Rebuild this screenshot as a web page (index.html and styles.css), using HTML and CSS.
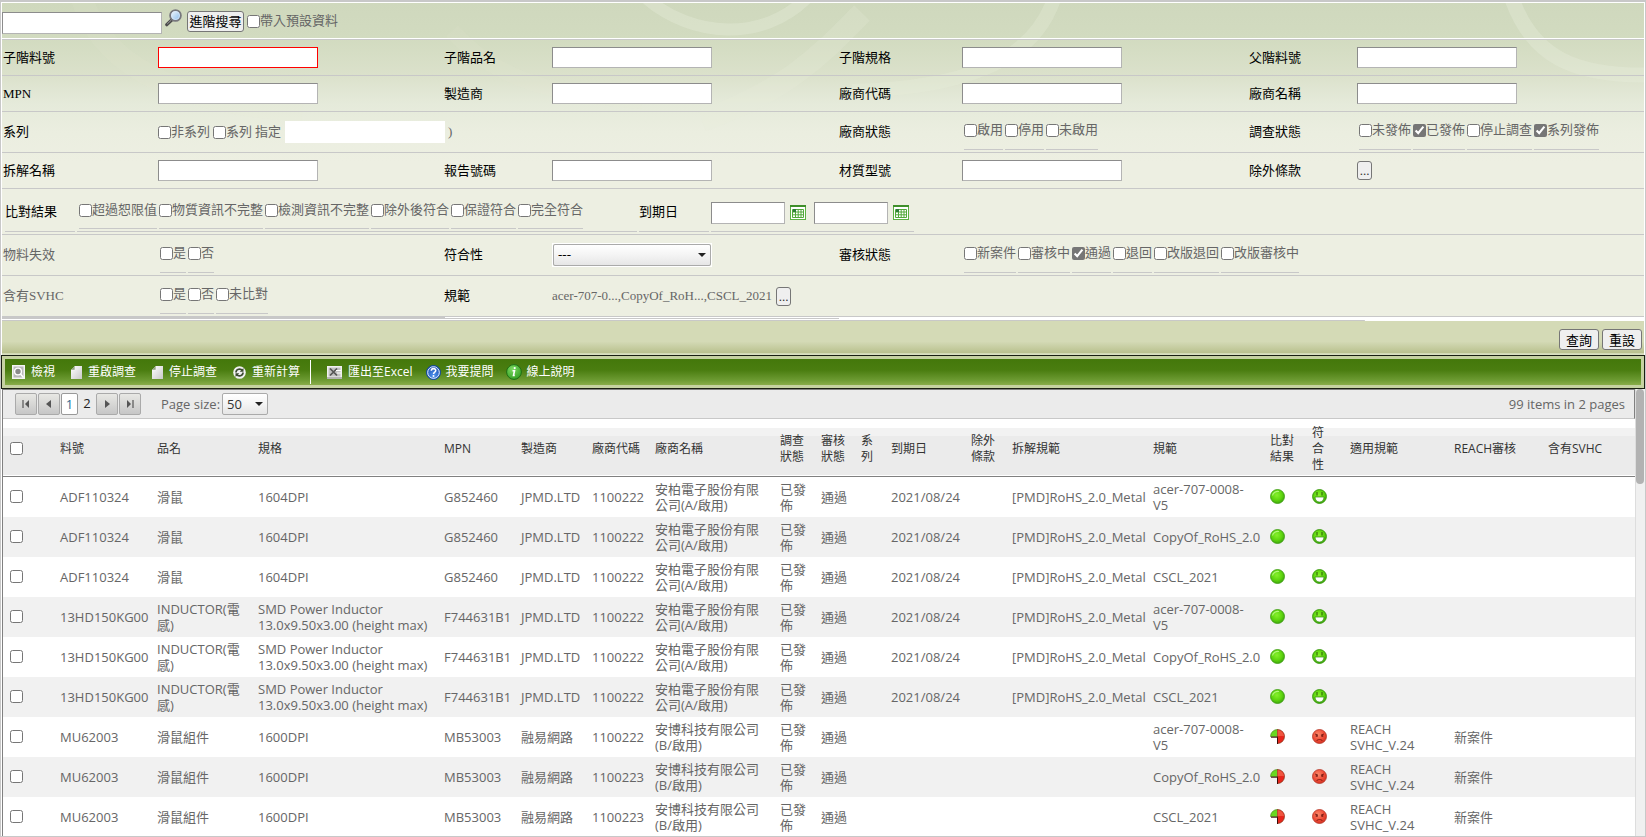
FILE: index.html
```html
<!DOCTYPE html>
<html lang="zh-Hant">
<head>
<meta charset="utf-8">
<title>料號調查</title>
<link rel="stylesheet" href="styles.css">
</head>
<body>
<svg class="defs" aria-hidden="true">
  <defs>
    <radialGradient id="gGreen" cx=".45" cy=".4" r=".6"><stop offset="0" stop-color="#86f02c"/><stop offset=".6" stop-color="#5fd60f"/><stop offset="1" stop-color="#3fa80c"/></radialGradient>
    <radialGradient id="gRed" cx=".4" cy=".35" r=".7"><stop offset="0" stop-color="#f98a6c"/><stop offset=".6" stop-color="#ee4a35"/><stop offset="1" stop-color="#cf2f20"/></radialGradient>
    <radialGradient id="gBlue" cx=".5" cy=".7" r=".7"><stop offset="0" stop-color="#4f93ee"/><stop offset="1" stop-color="#1748a8"/></radialGradient>
    <radialGradient id="gInfo" cx=".4" cy=".3" r=".8"><stop offset="0" stop-color="#7ddb62"/><stop offset="1" stop-color="#2d9a1e"/></radialGradient>
    <linearGradient id="gDoc" x1="0" y1="0" x2="1" y2="1"><stop offset="0" stop-color="#ffffff"/><stop offset="1" stop-color="#c9c9c9"/></linearGradient>
    <linearGradient id="gLens" x1="0" y1="0" x2="1" y2="1"><stop offset="0" stop-color="#ffffff"/><stop offset="1" stop-color="#7db4ea"/></linearGradient>
    <symbol id="ball" viewBox="0 0 15 15"><circle cx="7.500" cy="7.500" r="7" fill="url(#gGreen)" stroke="#3c9a12" stroke-width=".8"/><path d="M2.500 6.500C3 3.500 6 2 9 2.500" stroke="#b4f77c" fill="none" stroke-width="1.200"/></symbol>
    <symbol id="smile" viewBox="0 0 15 15"><circle cx="7.500" cy="7.500" r="6.900" fill="url(#gGreen)" stroke="#3c9a12" stroke-width="1"/><path d="M5 3v3.500M10 3v3.500" stroke="#2b5a08" stroke-width="1"/><path d="M3 8h9c0 3-2 5-4.500 5S3 11 3 8z" fill="#fff" stroke="#2f8a0c" stroke-width=".7"/></symbol>
    <symbol id="pie" viewBox="0 0 15 15"><path d="M7.500 7.500H.5a7 7 0 0 1 7-7z" fill="#6ad820" stroke="#4a8a18" stroke-width=".7"/><path d="M7.500 .5a7 7 0 0 1 0 14z" fill="#e8261c" stroke="#7d3012" stroke-width=".7"/><path d="M7.500 1a6.500 6.500 0 0 1 6.500 6H7.500z" fill="#f0553f"/><path d="M1 8.200h6.500V15" fill="none" stroke="#3a0d05" stroke-width="1"/></symbol>
    <symbol id="angry" viewBox="0 0 15 15"><circle cx="7.500" cy="7.500" r="7" fill="url(#gRed)" stroke="#b5392a" stroke-width=".8"/><path d="M3 5l3 1.200M12 5L9 6.200M3.500 7h2.500M9 7h2.500M4.800 5.500v2.300M10.300 5.500v2.300M4.500 12c1-2 5-2 6 0" stroke="#6b130c" stroke-width=".8" fill="none"/></symbol>
    <symbol id="cal" viewBox="0 0 16 15"><rect x=".5" y=".5" width="15" height="14" fill="#fff" stroke="#5cb043"/><path d="M0 1h16" stroke="#3f8f2a" stroke-width="2"/><path d="M2.500 4.500h11v8h-11zM2.500 7h11M2.500 9.800h11M5.500 4.500v8M8.200 4.500v8M11 4.500v8" fill="none" stroke="#52a83a" stroke-width="1"/><rect x="3" y="4" width="3" height="3" fill="#2f7d3a"/></symbol>
    <symbol id="doc" viewBox="0 0 11 13"><path d="M4 0h7v13H0V4z" fill="url(#gDoc)"/><path d="M4 0v4H0z" fill="#8fa07c"/><path d="M4 .3v3.900H.3" fill="none" stroke="#f4f4f4" stroke-width=".7"/></symbol>
  </defs>
</svg>

<section class="query">
  <svg class="swirl" viewBox="0 0 1642 150" preserveAspectRatio="none" aria-hidden="true">
    <g fill="none" stroke="#e9eedc">
      <path d="M645 -4C690 34 760 40 806 -6" stroke-width="12" opacity=".35"/>
      <path d="M860 10C820 50 790 85 700 118" stroke-width="22" opacity=".22"/>
      <path d="M1052 -4C1030 60 960 85 850 88" stroke-width="14" opacity=".3"/>
      <path d="M1510 -4C1530 52 1570 74 1650 72" stroke-width="15" opacity=".35"/>
      <path d="M80 -4C100 60 170 100 300 108" stroke-width="22" opacity=".1"/>
      <path d="M450 28C490 70 530 90 640 98" stroke-width="16" opacity=".1"/>
    </g>
  </svg>
  <form class="quick">
    <input class="box" type="text" aria-label="搜尋">
    <svg class="lens" viewBox="0 0 17 18" role="img" aria-label="搜尋"><path d="M1.800 15.700l5.400-5.200" stroke="#4a4a4a" stroke-width="3.200" stroke-linecap="round"/><path d="M2.200 15l4-3.800" stroke="#9a9a9a" stroke-width="1"/><circle cx="10.500" cy="6.500" r="5.400" fill="url(#gLens)" stroke="#77777d" stroke-width="1.800"/><circle cx="10.500" cy="6.500" r="4" fill="none" stroke="#d8e6f8" stroke-width=".8"/></svg>
    <button class="btn adv" type="button">進階搜尋</button>
    <label class="chk"><input type="checkbox">帶入預設資料</label>
  </form>

  <form class="fields">
    <div class="row">
      <label for="f1">子階料號</label><div><input class="box required" id="f1" type="text"></div>
      <label for="f2">子階品名</label><div><input class="box" id="f2" type="text"></div>
      <label for="f3">子階規格</label><div><input class="box" id="f3" type="text"></div>
      <label for="f4">父階料號</label><div><input class="box" id="f4" type="text"></div>
    </div>
    <div class="row">
      <label for="f5">MPN</label><div><input class="box" id="f5" type="text"></div>
      <label for="f6">製造商</label><div><input class="box" id="f6" type="text"></div>
      <label for="f7">廠商代碼</label><div><input class="box" id="f7" type="text"></div>
      <label for="f8">廠商名稱</label><div><input class="box" id="f8" type="text"></div>
    </div>
    <div class="row tall">
      <span>系列</span>
      <div class="series span"><label class="chk"><input type="checkbox">非系列</label><label class="chk"><input type="checkbox">系列</label><label for="f9">指定</label><input class="box plain" id="f9" type="text"><span>)</span></div>
      <span>廠商狀態</span>
      <div class="checks"><label class="chk"><input type="checkbox">啟用</label><label class="chk"><input type="checkbox">停用</label><label class="chk"><input type="checkbox">未啟用</label></div>
      <span>調查狀態</span>
      <div class="checks"><label class="chk"><input type="checkbox">未發佈</label><label class="chk"><input type="checkbox" checked>已發佈</label><label class="chk"><input type="checkbox">停止調查</label><label class="chk"><input type="checkbox" checked>系列發佈</label></div>
    </div>
    <div class="row">
      <label for="f10">拆解名稱</label><div><input class="box" id="f10" type="text"></div>
      <label for="f11">報告號碼</label><div><input class="box" id="f11" type="text"></div>
      <label for="f12">材質型號</label><div><input class="box" id="f12" type="text"></div>
      <span>除外條款</span><div><button class="btn dots" type="button">...</button></div>
    </div>
    <div class="result">
      <span class="under name">比對結果</span>
      <div class="under options"><label class="chk"><input type="checkbox">超過恕限值</label><label class="chk"><input type="checkbox">物質資訊不完整</label><label class="chk"><input type="checkbox">檢測資訊不完整</label><label class="chk"><input type="checkbox">除外後符合</label><label class="chk"><input type="checkbox">保證符合</label><label class="chk"><input type="checkbox">完全符合</label></div>
      <label class="under name" for="d1">到期日</label>
      <div class="under dates"><input class="box date" id="d1" type="text"><svg class="cal"><use href="#cal"/></svg><input class="box date second" type="text" aria-label="到期日迄"><svg class="cal"><use href="#cal"/></svg></div>
    </div>
    <div class="row tall">
      <span class="dim">物料失效</span>
      <div class="checks"><label class="chk"><input type="checkbox">是</label><label class="chk"><input type="checkbox">否</label></div>
      <label for="s1">符合性</label>
      <div><span class="pick wide"><select id="s1"><option>---</option></select></span></div>
      <span>審核狀態</span>
      <div class="checks span"><label class="chk"><input type="checkbox">新案件</label><label class="chk"><input type="checkbox">審核中</label><label class="chk"><input type="checkbox" checked>通過</label><label class="chk"><input type="checkbox">退回</label><label class="chk"><input type="checkbox">改版退回</label><label class="chk"><input type="checkbox">改版審核中</label></div>
    </div>
    <div class="row tall">
      <span class="dim">含有SVHC</span>
      <div class="checks"><label class="chk"><input type="checkbox">是</label><label class="chk"><input type="checkbox">否</label><label class="chk"><input type="checkbox">未比對</label></div>
      <span>規範</span>
      <div class="rules"><span class="dim">acer-707-0...,CopyOf_RoH...,CSCL_2021</span><button class="btn dots" type="button">...</button></div>
    </div>
  </form>
</section>
<div class="divider"></div>
<div class="actions"><button class="btn" type="button">查詢</button><button class="btn" type="button">重設</button></div>

<nav class="tools">
  <button type="button"><svg width="13" height="14" viewBox="0 0 13 14"><path d="M0 0h13v14H0z" fill="#f4f4f4"/><path d="M1.500 1.500h10v11h-10z" fill="#b9b9b9"/><circle cx="6" cy="6.500" r="3.400" fill="#8a8a8a" stroke="#fff" stroke-width="1.400"/><path d="M8.500 9l3 3.500" stroke="#fff" stroke-width="1.500"/></svg>檢視</button>
  <button type="button"><svg width="11" height="13"><use href="#doc"/></svg>重啟調查</button>
  <button type="button"><svg width="11" height="13"><use href="#doc"/></svg>停止調查</button>
  <button class="recalc" type="button"><svg width="13" height="13" viewBox="0 0 13 13"><circle cx="6.500" cy="6.500" r="6.300" fill="#f2f2f2"/><path d="M3 6.500C3 3 7.500 2 9.500 4.500M10 6.500c0 3.500-4.500 4.500-6.500 2" fill="none" stroke="#3b4a30" stroke-width="1.700"/><path d="M10.500 2v3.800H6.700zM2.500 11V7.200h3.800z" fill="#3b4a30"/></svg>重新計算</button>
  <i class="bar"></i>
  <button class="export" type="button"><svg width="15" height="13" viewBox="0 0 15 13"><path d="M0 0h15v13H0z" fill="#f1f1f1"/><path d="M1.500 1.500h12v9h-12z" fill="#c2c2c2"/><path d="M3 2.500l7 7M10 2.500l-7 7" stroke="#555" stroke-width="1.700"/><path d="M9 4.500h5M10 7h4" stroke="#fff" stroke-width="1.200"/><path d="M0 12h15" stroke="#777"/></svg>匯出至Excel</button>
  <button class="help" type="button"><svg width="15" height="15" viewBox="0 0 15 15"><circle cx="7.500" cy="7.500" r="7" fill="url(#gBlue)" stroke="#12489c"/><circle cx="7.500" cy="7.500" r="5.800" fill="none" stroke="#e9f1ff" stroke-width="1"/><path d="M5.300 5.800c.1-3 4.600-2.700 4.400-.1-.1 1.600-2.100 1.500-2.100 3.300" fill="none" stroke="#fff" stroke-width="1.600"/><circle cx="7.500" cy="11" r="1" fill="#fff"/></svg>我要提問</button>
  <button class="help" type="button"><svg width="16" height="16" viewBox="0 0 16 16"><circle cx="8" cy="8" r="7.400" fill="url(#gInfo)" stroke="#1f6e14"/><path d="M6.500 6.700h2l-1 4.800h1.300" fill="none" stroke="#fff" stroke-width="1.600"/><circle cx="8.700" cy="4.100" r="1.100" fill="#fff"/></svg>線上說明</button>
</nav>

<main class="grid">
  <div class="pane">
    <div class="pager">
      <div class="pages">
        <button class="nav" type="button" aria-label="First page"><svg viewBox="0 0 10 10"><path d="M2 1v8" stroke="#555" stroke-width="1.200"/><path d="M8 1v8L4 5z" fill="#555"/></svg></button>
        <button class="nav" type="button" aria-label="Previous page"><svg viewBox="0 0 10 10"><path d="M7 1v8L2 5z" fill="#555"/></svg></button>
        <a class="cur" href="#">1</a><a class="num" href="#">2</a>
        <button class="nav" type="button" aria-label="Next page"><svg viewBox="0 0 10 10"><path d="M3 1v8l5-4z" fill="#555"/></svg></button>
        <button class="nav" type="button" aria-label="Last page"><svg viewBox="0 0 10 10"><path d="M8 1v8" stroke="#555" stroke-width="1.200"/><path d="M2 1v8l4-4z" fill="#555"/></svg></button>
      </div>
      <label for="ps">Page size:</label>
      <span class="pick small"><select id="ps"><option>50</option></select></span>
      <span class="total">99 items in 2 pages</span>
    </div>
    <table>
      <colgroup><col class="w50"><col class="w97"><col class="w101"><col class="w186"><col class="w77"><col class="w71"><col class="w63"><col class="w125"><col class="w41"><col class="w40"><col class="w30"><col class="w80"><col class="w41"><col class="w141"><col class="w117"><col class="w42"><col class="w38"><col class="w104"><col class="w94"><col class="w94"></colgroup>
      <thead><tr><th><input type="checkbox" aria-label="全選"></th><th>料號</th><th>品名</th><th>規格</th><th>MPN</th><th>製造商</th><th>廠商代碼</th><th>廠商名稱</th><th>調查狀態</th><th>審核狀態</th><th>系列</th><th>到期日</th><th>除外條款</th><th>拆解規範</th><th>規範</th><th>比對結果</th><th>符<br>合<br>性</th><th>適用規範</th><th>REACH審核</th><th>含有SVHC</th></tr></thead>
      <tbody>
        <tr><td><input type="checkbox" aria-label="選取"></td><td>ADF110324</td><td>滑鼠</td><td>1604DPI</td><td>G852460</td><td>JPMD.LTD</td><td>1100222</td><td>安柏電子股份有限公司(A/啟用)</td><td>已發佈</td><td>通過</td><td></td><td>2021/08/24</td><td></td><td class="nw">[PMD]RoHS_2.0_Metal</td><td>acer-707-0008-<br>V5</td><td><svg class="st"><use href="#ball"/></svg></td><td><svg class="st"><use href="#smile"/></svg></td><td></td><td></td><td></td></tr>
        <tr><td><input type="checkbox" aria-label="選取"></td><td>ADF110324</td><td>滑鼠</td><td>1604DPI</td><td>G852460</td><td>JPMD.LTD</td><td>1100222</td><td>安柏電子股份有限公司(A/啟用)</td><td>已發佈</td><td>通過</td><td></td><td>2021/08/24</td><td></td><td class="nw">[PMD]RoHS_2.0_Metal</td><td class="nw">CopyOf_RoHS_2.0</td><td><svg class="st"><use href="#ball"/></svg></td><td><svg class="st"><use href="#smile"/></svg></td><td></td><td></td><td></td></tr>
        <tr><td><input type="checkbox" aria-label="選取"></td><td>ADF110324</td><td>滑鼠</td><td>1604DPI</td><td>G852460</td><td>JPMD.LTD</td><td>1100222</td><td>安柏電子股份有限公司(A/啟用)</td><td>已發佈</td><td>通過</td><td></td><td>2021/08/24</td><td></td><td class="nw">[PMD]RoHS_2.0_Metal</td><td>CSCL_2021</td><td><svg class="st"><use href="#ball"/></svg></td><td><svg class="st"><use href="#smile"/></svg></td><td></td><td></td><td></td></tr>
        <tr><td><input type="checkbox" aria-label="選取"></td><td>13HD150KG00</td><td>INDUCTOR(電感)</td><td>SMD Power Inductor<br>13.0x9.50x3.00 (height max)</td><td>F744631B1</td><td>JPMD.LTD</td><td>1100222</td><td>安柏電子股份有限公司(A/啟用)</td><td>已發佈</td><td>通過</td><td></td><td>2021/08/24</td><td></td><td class="nw">[PMD]RoHS_2.0_Metal</td><td>acer-707-0008-<br>V5</td><td><svg class="st"><use href="#ball"/></svg></td><td><svg class="st"><use href="#smile"/></svg></td><td></td><td></td><td></td></tr>
        <tr><td><input type="checkbox" aria-label="選取"></td><td>13HD150KG00</td><td>INDUCTOR(電感)</td><td>SMD Power Inductor<br>13.0x9.50x3.00 (height max)</td><td>F744631B1</td><td>JPMD.LTD</td><td>1100222</td><td>安柏電子股份有限公司(A/啟用)</td><td>已發佈</td><td>通過</td><td></td><td>2021/08/24</td><td></td><td class="nw">[PMD]RoHS_2.0_Metal</td><td class="nw">CopyOf_RoHS_2.0</td><td><svg class="st"><use href="#ball"/></svg></td><td><svg class="st"><use href="#smile"/></svg></td><td></td><td></td><td></td></tr>
        <tr><td><input type="checkbox" aria-label="選取"></td><td>13HD150KG00</td><td>INDUCTOR(電感)</td><td>SMD Power Inductor<br>13.0x9.50x3.00 (height max)</td><td>F744631B1</td><td>JPMD.LTD</td><td>1100222</td><td>安柏電子股份有限公司(A/啟用)</td><td>已發佈</td><td>通過</td><td></td><td>2021/08/24</td><td></td><td class="nw">[PMD]RoHS_2.0_Metal</td><td>CSCL_2021</td><td><svg class="st"><use href="#ball"/></svg></td><td><svg class="st"><use href="#smile"/></svg></td><td></td><td></td><td></td></tr>
        <tr><td><input type="checkbox" aria-label="選取"></td><td>MU62003</td><td>滑鼠組件</td><td>1600DPI</td><td>MB53003</td><td>融易網路</td><td>1100222</td><td>安博科技有限公司(B/啟用)</td><td>已發佈</td><td>通過</td><td></td><td></td><td></td><td></td><td>acer-707-0008-<br>V5</td><td><svg class="st"><use href="#pie"/></svg></td><td><svg class="st"><use href="#angry"/></svg></td><td>REACH SVHC_V.24</td><td>新案件</td><td></td></tr>
        <tr><td><input type="checkbox" aria-label="選取"></td><td>MU62003</td><td>滑鼠組件</td><td>1600DPI</td><td>MB53003</td><td>融易網路</td><td>1100223</td><td>安博科技有限公司(B/啟用)</td><td>已發佈</td><td>通過</td><td></td><td></td><td></td><td></td><td class="nw">CopyOf_RoHS_2.0</td><td><svg class="st"><use href="#pie"/></svg></td><td><svg class="st"><use href="#angry"/></svg></td><td>REACH SVHC_V.24</td><td>新案件</td><td></td></tr>
        <tr><td><input type="checkbox" aria-label="選取"></td><td>MU62003</td><td>滑鼠組件</td><td>1600DPI</td><td>MB53003</td><td>融易網路</td><td>1100223</td><td>安博科技有限公司(B/啟用)</td><td>已發佈</td><td>通過</td><td></td><td></td><td></td><td></td><td>CSCL_2021</td><td><svg class="st"><use href="#pie"/></svg></td><td><svg class="st"><use href="#angry"/></svg></td><td>REACH SVHC_V.24</td><td>新案件</td><td></td></tr>
      </tbody>
    </table>
  </div>
  <div class="track"><div class="thumb"></div></div>
</main>
</body>
</html>
```
FILE: styles.css
```css
* { box-sizing: border-box; }
html { height: 100%; overflow: hidden; }
body {
  margin: 0;
  height: 100%;
  display: flex;
  flex-direction: column;
  overflow: hidden;
  background: #fff;
  border: 1px solid #c8c8c8;
  border-top-width: 2px;
  font: 13px/16px "Liberation Serif", "Noto Sans CJK TC", serif;
  color: #000;
}
input, button, select { font: inherit; color: inherit; margin: 0; }
input[type="checkbox"] { width: 13px; height: 13px; flex: none; accent-color: #767676; }
.defs { position: absolute; top: 0; left: 0; width: 0; height: 0; }

/* search form */
.query {
  position: relative;
  flex: none;
  margin: 1px 1px 0;
  background: linear-gradient(#cfd8bd 0, #d2dbc0 36px, #dbe1cb 72px, #e5eada 100px, #ebeee0 130px, #edefe2 160px);
}
.swirl { position: absolute; top: 0; left: 0; width: 100%; height: 150px; }
.box {
  width: 160px;
  height: 21px;
  padding: 1px 3px;
  background: #fff;
  border: 1px solid #8c8c8c;
  border-right-color: #b4b4b4;
  border-bottom-color: #b4b4b4;
}
.box.required { border-color: #f00; }
.box.plain { border: 0; height: 22px; }
.btn {
  height: 21px;
  padding: 0 6px;
  font-family: "Noto Sans CJK TC", sans-serif;
  line-height: 18px;
  background: #efefef;
  border: 1px solid #767676;
  border-radius: 3px;
  white-space: nowrap;
}
.btn.adv { padding: 0 1px; width: 57px; }
.btn.dots { width: 15px; height: 19px; padding: 0; font-family: "Liberation Serif", serif; color: #333; }
.quick {
  position: relative;
  display: flex;
  align-items: center;
  height: 36px;
  padding-top: 2px;
  border-bottom: 1px solid #fff;
}
.quick .box { height: 22px; margin-top: 2px; }
.quick .lens { width: 17px; height: 18px; margin: 0 5px 8px 3px; }
.quick .chk { margin: 0 0 1px 3px; }
.quick .adv { margin-bottom: 1px; }
.chk { display: flex; align-items: center; color: #666; white-space: nowrap; }
.fields { position: relative; border-top: 1px solid #c8c8c8; }
.row {
  display: grid;
  grid-template-columns: 155fr 286fr 108fr 287fr 123fr 287fr 108fr 287fr;
  align-items: center;
  height: 36px;
  padding-left: 1px;
  border-bottom: 1px solid #c8c8c8;
}
.row.tall { height: 41px; }
.row > div { display: flex; align-items: center; }
.row .checks { align-self: end; gap: 2px; padding: 0 0 2px 2px; }
.checks .chk, .options .chk { border-bottom: 1px solid #c8c8c8; padding-bottom: 11px; }
.row .span { grid-column: span 3; }
.series { gap: 3px; color: #666; white-space: nowrap; }
.series .plain { margin-left: 1px; }
.dim { color: #666; }
.rules { gap: 4px; white-space: nowrap; }

.result {
  display: flex;
  align-items: flex-end;
  gap: 2px;
  height: 46px;
  padding: 0 0 2px 3px;
  border-bottom: 1px solid #c8c8c8;
}
.under { display: flex; align-items: center; border-bottom: 1px solid #c8c8c8; }
.under.name { width: 70px; height: 40px; }
.under.options { width: 560px; gap: 2px; padding: 0 0 2px 2px; }
.options .chk { padding-bottom: 10px; }
.under.dates { width: 203px; height: 36px; padding-bottom: 2px; }
.box.date { width: 74px; height: 22px; }
.box.second { margin-left: 8px; }
.cal { width: 16px; height: 15px; margin-left: 5px; }

.pick { position: relative; display: inline-block; }
.pick select {
  appearance: none;
  width: 100%;
  height: 22px;
  padding: 0 4px;
  border: 1px solid #aaa;
  border-radius: 2px;
  background: linear-gradient(#fff, #f4f4f4 50%, #e6e6e6);
  display: block;
}
.pick::after {
  content: "";
  position: absolute;
  top: 9px;
  right: 5px;
  border: 4px solid transparent;
  border-top-color: #222;
  border-bottom-width: 0;
  pointer-events: none;
}
.pick.wide { width: 160px; border: 1px solid #fff; }
.pick.small { width: 46px; }

.divider {
  flex: none;
  height: 4px;
  margin: 0 1px;
  background:
    linear-gradient(#c8c8c8, #c8c8c8) 0 0 / 27% 2px no-repeat,
    linear-gradient(#c8c8c8, #c8c8c8) 0 1px / 51% 1px no-repeat,
    linear-gradient(#c8c8c8, #c8c8c8) 0 3px / 83% 1px no-repeat,
    #fff;
}
.actions {
  flex: none;
  display: flex;
  justify-content: flex-end;
  align-items: center;
  gap: 3px;
  height: 34px;
  margin: 0 1px;
  padding: 3px 2px 0 0;
  background: linear-gradient(#d4dab6 0, #d4dab6 60%, #b9c18e 94%, #d9e0c0 96%);
}

/* command bar */
.tools {
  flex: none;
  display: flex;
  align-items: center;
  height: 34px;
  padding: 0 0 0 4px;
  border: 1px solid #1a1f12;
  box-shadow: inset 0 0 0 3px #c6d2a2;
  background: linear-gradient(#44780b 3px, #4a7d10 14px, #6c9a32 24px, #8fb04f 30px);
  color: #fff;
  font: 12px/16px "Open Sans", "Noto Sans CJK TC", sans-serif;
}
.tools button {
  display: flex;
  align-items: center;
  gap: 6px;
  padding: 0 10px 0 6px;
  border: 0;
  background: none;
  white-space: nowrap;
}
.tools .bar { width: 1px; height: 24px; background: #fff; }
.tools .export { padding: 0 7px 0 16px; }
.tools .help { gap: 5px; padding: 0 6px; }

/* result grid */
.grid {
  flex: 1;
  min-height: 0;
  display: flex;
  overflow: hidden;
  margin-left: 1px;
  font: 13px/16px "Open Sans", "Noto Sans CJK TC", sans-serif;
  color: #666;
}
.pane { flex: 1; min-width: 0; overflow: hidden; border-left: 1px solid #808080; }
.pager {
  display: flex;
  align-items: center;
  height: 30px;
  padding: 0 9px 0 12px;
  background: #ebebeb;
  border-top: 1px solid #808080;
  border-bottom: 1px solid #c8c8c8;
  border-right: 1px solid #808080;
}
.pages { display: flex; align-items: center; gap: 1px; margin-right: 20px; }
.nav {
  width: 22px;
  height: 22px;
  padding: 0;
  border: 1px solid #aaa;
  border-radius: 2px;
  background: linear-gradient(#e8e8e4, #c6c6c6);
}
.nav svg { display: block; width: 10px; height: 10px; margin: auto; }
.pages a { color: #222; text-decoration: none; height: 22px; line-height: 20px; text-align: center; }
.pages .cur { width: 17px; background: #fff; border: 1px solid #999; border-radius: 2px; color: #2b6a90; }
.pages .num { width: 16px; }
.pager .small { margin-left: 2px; color: #333; }
.total { margin-left: auto; }

table { width: 100%; table-layout: fixed; border-collapse: collapse; }
th, td { padding: 4px 3px 4px 7px; text-align: left; vertical-align: middle; }
th { font-weight: 400; font-size: 12px; color: #333; height: 57px; padding-top: 6px; padding-bottom: 2px; }
td { height: 40px; }
th:first-child { padding-top: 9px; }
td:first-child { padding-top: 6px; }
thead tr {
  background: linear-gradient(#fff 9px, #f2f2f2 9px, #f2f2f2 17px, #ebebeb 17px);
  border-bottom: 1px solid #808080;
}
tbody tr:nth-child(even) { background: #f1f1f1; }
.nw { white-space: nowrap; }
.st { display: block; width: 15px; height: 15px; }
.w30 { width: 30px; }
.w38 { width: 38px; }
.w40 { width: 40px; }
.w41 { width: 41px; }
.w42 { width: 42px; }
.w50 { width: 50px; }
.w63 { width: 63px; }
.w71 { width: 71px; }
.w77 { width: 77px; }
.w80 { width: 80px; }
.w94 { width: 94px; }
.w97 { width: 97px; }
.w101 { width: 101px; }
.w104 { width: 104px; }
.w117 { width: 117px; }
.w125 { width: 125px; }
.w141 { width: 141px; }
.w186 { width: 186px; }
.track { width: 10px; background: #f0f0f0; border-left: 1px solid #ddd; }
.thumb { width: 8px; height: 95px; border-radius: 4px; background: #b2b2b2; }
```
